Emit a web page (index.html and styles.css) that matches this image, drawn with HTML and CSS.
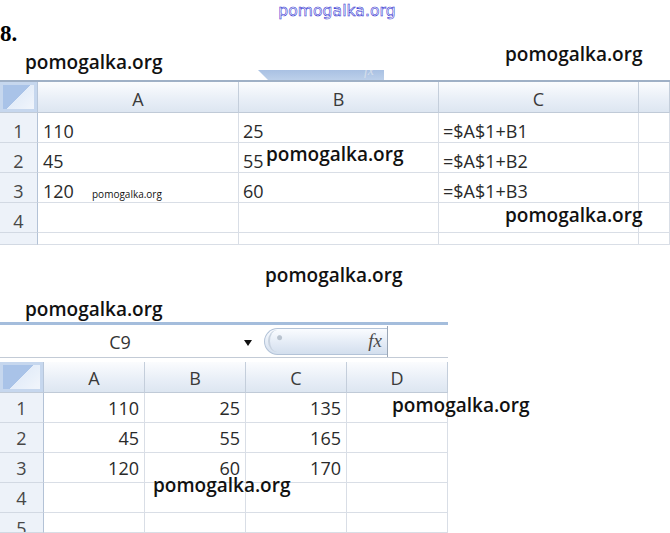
FILE: index.html
```html
<!DOCTYPE html>
<html>
<head>
<meta charset="utf-8">
<link rel="stylesheet" href="styles.css">
</head>
<body>
<div class="page">
  <div class="site">pomogalka.org</div>
  <div class="num">8.</div>

  <section class="sheet1">
    <div class="tabbar"><div class="fxtab"><span class="fxghost">fx</span></div></div>
    <div class="grid g1">
      <div class="corner"></div><div class="ch">A</div><div class="ch">B</div><div class="ch">C</div><div class="ch"></div>
      <div class="rh">1</div><div class="c">110</div><div class="c">25</div><div class="c">=$A$1+B1</div><div class="c"></div>
      <div class="rh">2</div><div class="c">45</div><div class="c">55</div><div class="c">=$A$1+B2</div><div class="c"></div>
      <div class="rh">3</div><div class="c">120</div><div class="c">60</div><div class="c">=$A$1+B3</div><div class="c"></div>
      <div class="rh">4</div><div class="c"></div><div class="c"></div><div class="c"></div><div class="c"></div>
      <div class="rh">5</div><div class="c"></div><div class="c"></div><div class="c"></div><div class="c"></div>
    </div>
  </section>

  <section class="sheet2">
    <div class="fbar">
      <div class="namebox">C9</div>
      <div class="drop"></div>
      <div class="fxbox"><span class="knob"></span><span class="fx">fx</span></div>
    </div>
    <div class="grid g2">
      <div class="corner"></div><div class="ch">A</div><div class="ch">B</div><div class="ch">C</div><div class="ch">D</div>
      <div class="rh">1</div><div class="c r">110</div><div class="c r">25</div><div class="c r">135</div><div class="c"></div>
      <div class="rh">2</div><div class="c r">45</div><div class="c r">55</div><div class="c r">165</div><div class="c"></div>
      <div class="rh">3</div><div class="c r">120</div><div class="c r">60</div><div class="c r">170</div><div class="c"></div>
      <div class="rh">4</div><div class="c"></div><div class="c"></div><div class="c"></div><div class="c"></div>
      <div class="rh">5</div><div class="c"></div><div class="c"></div><div class="c"></div><div class="c"></div>
    </div>
  </section>

  <div class="wm wm1">pomogalka.org</div>
  <div class="wm wm2">pomogalka.org</div>
  <div class="wm wm3">pomogalka.org</div>
  <div class="wm wm-small">pomogalka.org</div>
  <div class="wm wm4">pomogalka.org</div>
  <div class="wm wm5">pomogalka.org</div>
  <div class="wm wm6">pomogalka.org</div>
  <div class="wm wm7">pomogalka.org</div>
  <div class="wm wm8">pomogalka.org</div>
</div>
</body>
</html>
```

FILE: styles.css
```css
* { box-sizing: border-box; }
html, body { margin: 0; padding: 0; background: #fff; }
.page {
  position: relative;
  width: 670px;
  height: 533px;
  overflow: hidden;
  font-family: "Open Sans", "Noto Sans", sans-serif;
}
.site {
  height: 22px;
  line-height: 22px;
  text-align: center;
  padding-left: 4px;
  font-family: "DejaVu Sans", sans-serif;
  font-size: 15.5px;
  letter-spacing: 0.1px;
  color: #fff;
  -webkit-text-stroke: 0.55px #2b2bd0;
}
.num {
  height: 24px;
  line-height: 24px;
  font-family: "Liberation Serif", serif;
  font-weight: bold;
  font-size: 23px;
  color: #000;
}
.sheet1 { margin-top: 22px; }
.tabbar {
  height: 14px;
  border-bottom: 2px solid #9fb0c6;
  padding-top: 2px;
}
.fxtab {
  margin-left: 258px;
  width: 126px;
  height: 10px;
  background: linear-gradient(#a9c1e3, #bcd0ea);
  clip-path: polygon(0 0, 100% 0, 100% 100%, 10px 100%);
  position: relative;
}
.fxghost {
  position: absolute;
  right: 10px;
  top: -7px;
  font-family: "Liberation Serif", serif;
  font-style: italic;
  font-size: 14px;
  color: #d5deea;
}
.grid { display: grid; }
.g1 {
  grid-template-columns: 38px 201px 200px 200px 31px;
  grid-template-rows: 31px 30px 30px 30px 30px 12px;
}
.g2 {
  margin-top: 4px;
  width: 448px;
  grid-template-columns: 44px 101px 101px 101px 101px;
  grid-template-rows: 31px 30px 30px 30px 30px 20px;
}
.grid > div {
  border-right: 1px solid #d9dee6;
  border-bottom: 1px solid #d9dee6;
  overflow: hidden;
  white-space: nowrap;
  font-size: 18px;
  line-height: 24px;
}
.corner {
  background: linear-gradient(135deg, #a9c3e8 0%, #a9c3e8 50%, #e4edf9 50%, #f4f7fc 100%);
  border-right: 1px solid #b7c6da !important;
  border-bottom: 1px solid #c1cbd8 !important;
  box-shadow: inset 0 0 0 3px #c6d7ee;
}
.ch {
  background: linear-gradient(#fbfcfe, #e9eff7 55%, #dde6f1);
  text-align: center;
  color: #3a3a3a;
  border-right-color: #c4cedb !important;
  border-bottom-color: #c0cad7 !important;
}
.g1 .ch { padding-top: 5px; }
.g2 .ch { padding-top: 4px; }
.rh {
  background: #edf2f9;
  text-align: center;
  color: #474747;
  border-right-color: #b3c2d6 !important;
  border-bottom-color: #d2d9e3 !important;
}
.c { color: #2a2a2a; padding-left: 4px; }
.g1 .c:nth-child(5n+2) { padding-left: 5px; }
.g1 .c, .g1 .rh { padding-top: 6px; }
.g2 .c, .g2 .rh { padding-top: 3px; }
.c.r { text-align: right; padding-right: 5px; padding-left: 0; }

.sheet2 { margin-top: 77px; }
.fbar {
  width: 448px;
  height: 36px;
  border-top: 3px solid #a4bddc;
  border-bottom: 1px solid #c3cbd6;
  display: flex;
  align-items: center;
}
.namebox {
  width: 240px;
  text-align: center;
  font-size: 18px;
  color: #333;
  line-height: 24px;
  padding-top: 1px;
}
.drop {
  width: 0;
  height: 0;
  margin-left: 4px;
  margin-top: 3px;
  border-left: 4.5px solid transparent;
  border-right: 4.5px solid transparent;
  border-top: 6px solid #111;
}
.fxbox {
  margin-left: 12px;
  width: 123px;
  height: 27px;
  border: 1px solid #b3c3d8;
  border-right: none;
  border-radius: 14px 0 0 14px;
  background: linear-gradient(#fafcff, #e2eaf5 60%, #d3dfee);
  position: relative;
  display: flex;
  align-items: center;
  justify-content: space-between;
  padding: 0 5px 0 3px;
}
.fxbox::after {
  content: "";
  position: absolute;
  right: -1px;
  top: -3px;
  height: 31px;
  border-right: 1px solid #9aa6b6;
}
.knob {
  width: 18px;
  height: 22px;
  border-radius: 50%;
  border-left: 2px solid #c9d3e0;
  background: radial-gradient(circle at 60% 35%, #b9c3cf 0 2px, transparent 3px);
}
.fx {
  font-family: "Liberation Serif", serif;
  font-style: italic;
  font-size: 19px;
  color: #4a4a4a;
  line-height: 20px;
}

.wm {
  position: absolute;
  font-family: "Open Sans", sans-serif;
  font-weight: 600;
  font-size: 19px;
  line-height: 24px;
  color: #111;
  white-space: nowrap;
}
.wm1 { left: 25px; top: 50px; }
.wm2 { left: 505px; top: 42px; }
.wm3 { left: 266px; top: 142px; }
.wm-small { left: 92px; top: 188px; font-size: 10px; line-height: 12px; font-weight: 400; }
.wm4 { left: 505px; top: 203px; }
.wm5 { left: 265px; top: 263px; }
.wm6 { left: 25px; top: 297px; }
.wm7 { left: 392px; top: 393px; }
.wm8 { left: 153px; top: 473px; }
```
